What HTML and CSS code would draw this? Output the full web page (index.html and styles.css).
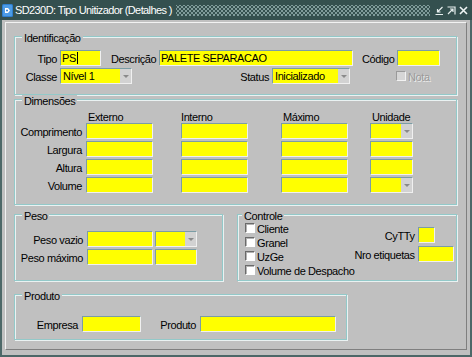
FILE: index.html
```html
<!DOCTYPE html>
<html lang="pt">
<head>
    <meta charset="UTF-8">
    <title>SD230D: Tipo Unitizador (Detalhes )</title>
    <link rel="stylesheet" href="styles.css">
</head>
<body>
<div class="window">
    <!-- Title bar -->
    <div class="titlebar">
        <svg class="app-icon" viewBox="0 0 11 13">
            <rect x="0" y="0" width="11" height="13" rx="1.5" fill="#2f7fd0"/>
            <rect x="1" y="1" width="9" height="11" rx="1" fill="#4c9be6"/>
            <path d="M3 4 H6 L8 6.5 L6 9 H3 Z" fill="#ffffff"/>
            <circle cx="5" cy="6.5" r="1" fill="#2f7fd0"/>
        </svg>
        <span class="title">SD230D: Tipo Unitizador (Detalhes )</span>
        <div class="grip"></div>
        <div class="win-buttons">
            <svg viewBox="0 0 9 9"><path d="M7.5 1 L2.5 6 M2.5 3 V6 H5.5 M0.5 8.5 H8" fill="none" stroke="#e6eeee" stroke-width="1.2"/></svg>
            <svg viewBox="0 0 9 9"><path d="M0.5 1 H8 V8.5 M1 8 L6 3 M3 3 H6 V6" fill="none" stroke="#e6eeee" stroke-width="1.2"/></svg>
            <svg viewBox="0 0 9 9"><path d="M1 1 L8 8 M8 1 L1 8" fill="none" stroke="#eef4f4" stroke-width="1.6"/></svg>
        </div>
    </div>

    <div class="frame">
        <div class="panel">
            <!-- Identificação -->
            <div class="group ident">
                <div class="group-title">Identificação</div>
                <div class="row">
                    <span class="lbl lbl-first">Tipo</span>
                    <div class="field f-tipo">PS<span class="caret"></span></div>
                    <span class="lbl lbl-desc">Descrição</span>
                    <div class="field f-desc">PALETE SEPARACAO</div>
                    <span class="lbl lbl-cod">Código</span>
                    <div class="field f-cod"></div>
                </div>
                <div class="row">
                    <span class="lbl lbl-first">Classe</span>
                    <div class="field select f-classe"><span class="value">Nível 1</span><span class="drop"></span></div>
                    <span class="lbl lbl-status">Status</span>
                    <div class="field select f-status"><span class="value">Inicializado</span><span class="drop"></span></div>
                    <div class="check disabled nota"><span class="box"></span>Nota</div>
                </div>
            </div>

            <!-- Dimensões -->
            <div class="group dims">
                <div class="group-title">Dimensões</div>
                <div class="dim-head">
                    <span></span>
                    <span>Externo</span>
                    <span class="no-pad">Interno</span>
                    <span>Máximo</span>
                    <span>Unidade</span>
                </div>
                <div class="dim-grid">
                    <span class="lbl lbl-dim">Comprimento</span>
                    <div class="field f-dim"></div>
                    <div class="field f-dim"></div>
                    <div class="field f-dim"></div>
                    <div class="field select f-unit"><span class="value"></span><span class="drop"></span></div>

                    <span class="lbl lbl-dim">Largura</span>
                    <div class="field f-dim"></div>
                    <div class="field f-dim"></div>
                    <div class="field f-dim"></div>
                    <div class="field f-unit"></div>

                    <span class="lbl lbl-dim">Altura</span>
                    <div class="field f-dim"></div>
                    <div class="field f-dim"></div>
                    <div class="field f-dim"></div>
                    <div class="field f-unit"></div>

                    <span class="lbl lbl-dim">Volume</span>
                    <div class="field f-dim"></div>
                    <div class="field f-dim"></div>
                    <div class="field f-dim"></div>
                    <div class="field select f-unit"><span class="value"></span><span class="drop"></span></div>
                </div>
            </div>

            <div class="bottom-row">
                <!-- Peso -->
                <div class="group peso">
                    <div class="group-title">Peso</div>
                    <div class="peso-grid">
                        <span class="lbl lbl-peso">Peso vazio</span>
                        <div class="field"></div>
                        <div class="field select"><span class="value"></span><span class="drop"></span></div>

                        <span class="lbl lbl-peso">Peso máximo</span>
                        <div class="field"></div>
                        <div class="field"></div>
                    </div>
                </div>

                <!-- Controle -->
                <div class="group controle">
                    <div class="group-title">Controle</div>
                    <div class="ctrl-body">
                        <div class="checks">
                            <div class="check"><span class="box"></span>Cliente</div>
                            <div class="check"><span class="box"></span>Granel</div>
                            <div class="check"><span class="box"></span>UzGe</div>
                            <div class="check"><span class="box"></span>Volume de Despacho</div>
                        </div>
                        <div class="ctrl-fields">
                            <span class="lbl lbl-ctrl">CyTTy</span>
                            <div class="field f-cytty"></div>
                            <span class="lbl lbl-ctrl">Nro etiquetas</span>
                            <div class="field"></div>
                        </div>
                    </div>
                </div>
            </div>

            <!-- Produto -->
            <div class="group produto">
                <div class="group-title">Produto</div>
                <div class="row">
                    <span class="lbl lbl-empresa">Empresa</span>
                    <div class="field f-empresa"></div>
                    <span class="lbl lbl-produto">Produto</span>
                    <div class="field f-produto"></div>
                </div>
            </div>
        </div>
    </div>
</div>
</body>
</html>
```

FILE: styles.css
```css
/* General Reset */
* {
    margin: 0;
    padding: 0;
    box-sizing: border-box;
}

body {
    font-family: "Liberation Sans", Arial, sans-serif;
    font-size: 11px;
    letter-spacing: -0.4px;
    color: #000;
    background-color: #c0c0c0;
}

.window {
    width: 472px;
    height: 357px;
    display: flex;
    flex-direction: column;
    background-color: #c0c0c0;
}

/* Title bar */
.titlebar {
    height: 20px;
    flex: none;
    display: flex;
    align-items: center;
    padding: 0 4px 0 2px;
    background-color: #34504f;
    color: #fff;
}

.app-icon {
    width: 11px;
    height: 13px;
    flex: none;
    margin-right: 2px;
}

.title {
    white-space: nowrap;
    letter-spacing: -0.6px;
}

.grip {
    flex: 1;
    height: 11px;
    margin: 0 5px 0 4px;
    background-image:
        radial-gradient(circle, #7f9b9b 0.9px, transparent 1.2px),
        radial-gradient(circle, #7f9b9b 0.9px, transparent 1.2px);
    background-size: 4px 4px;
    background-position: 0 0, 2px 2px;
}

.win-buttons {
    display: flex;
    gap: 3px;
}

.win-buttons svg {
    width: 9px;
    height: 9px;
}

/* Window body */
.frame {
    flex: 1;
    display: flex;
    border: 2px solid #4d6868;
    border-top: 0;
    padding: 2px 3px 5px;
}

.panel {
    flex: 1;
    border: 1px solid;
    border-color: #f2f2f2 #7f7f7f #7f7f7f #f2f2f2;
    padding: 13px 9px 0 8px;
}

/* Group boxes */
.group {
    border: 1px solid #93c9c9;
    box-shadow: inset 1px 1px 0 #eaf2f2, 1px 1px 0 #eaf2f2;
}

.group-title {
    display: table;
    margin: -5px 0 0 7px;
    padding: 0 2px;
    line-height: 12px;
    background-color: #c0c0c0;
}

.ident {
    padding-bottom: 10px;
}

.dims {
    margin-top: 4px;
    padding-bottom: 11px;
}

.bottom-row {
    display: flex;
    gap: 14px;
    margin-top: 9px;
}

.peso {
    width: 209px;
    padding-bottom: 15px;
}

.controle {
    width: 220px;
}

.controle .group-title {
    margin-left: 4px;
}

.produto {
    width: 333px;
    margin-top: 13px;
    padding-bottom: 7px;
}

/* Rows and labels */
.row {
    display: flex;
    align-items: flex-start;
    height: 16px;
}

.ident .group-title + .row {
    margin-top: 6px;
}

.row + .row {
    margin-top: 2px;
}

.lbl {
    padding-top: 1px;
    line-height: 16px;
    white-space: nowrap;
}

.lbl-first {
    width: 45px;
    text-align: right;
    padding-right: 3px;
}

.lbl-desc {
    width: 48px;
    margin-left: 10px;
}

.lbl-cod {
    width: 35px;
    margin-left: 9px;
}

.lbl-status {
    width: 140px;
    text-align: right;
    padding-right: 3px;
}

/* Fields */
.field {
    height: 16px;
    background-color: #ffff00;
    border: 1px solid;
    border-color: #7b9da5 #f0f0f0 #f0f0f0 #7b9da5;
    line-height: 14px;
    padding: 0 1px;
    white-space: nowrap;
    overflow: hidden;
}

.caret {
    display: inline-block;
    width: 1px;
    height: 12px;
    margin-left: 1px;
    vertical-align: -2px;
    background-color: #000;
}

.f-tipo { width: 41px; }
.f-desc { width: 194px; }
.f-cod { width: 43px; }
.f-classe { width: 72px; }
.f-status { width: 78px; }

.select {
    display: flex;
    padding: 0;
}

.select .value {
    flex: 1;
    padding-left: 2px;
}

.select .drop {
    width: 11px;
    display: flex;
    align-items: center;
    justify-content: center;
    background-color: #d2d2d2;
}

.select .drop::after {
    content: "";
    border-left: 3px solid transparent;
    border-right: 3px solid transparent;
    border-top: 3px solid #8a8a8a;
}

/* Checkboxes */
.check {
    display: flex;
    align-items: center;
    height: 14px;
    white-space: nowrap;
}

.check .box {
    width: 10px;
    height: 10px;
    margin: -3px 2px 0 0;
    background-color: #fff;
    border: 1px solid;
    border-color: #6a6a6a #ffffff #ffffff #6a6a6a;
    box-shadow: inset 1px 1px 0 #b4b4b4;
}

.check.disabled {
    color: #9a9a9a;
    text-shadow: 1px 1px 0 #ececec;
}

.check.disabled .box {
    background-color: #d6d6d6;
    border-color: #9a9a9a #f2f2f2 #f2f2f2 #9a9a9a;
    box-shadow: none;
}

.nota {
    margin: 2px 0 0 46px;
}

/* Dimensões grid */
.dim-head,
.dim-grid {
    display: grid;
    grid-template-columns: 71px 95px 100px 89px 43px;
}

.dim-head {
    height: 13px;
    margin-top: 3px;
    line-height: 14px;
}

.dim-head span {
    padding-left: 2px;
}

.dim-head .no-pad {
    padding-left: 0;
}

.dim-grid {
    grid-auto-rows: 16px;
    row-gap: 2px;
}

.lbl-dim {
    text-align: right;
    padding-right: 4px;
}

.f-dim { width: 67px; }
.f-unit { width: 43px; }

/* Peso grid */
.peso-grid {
    display: grid;
    grid-template-columns: 70px 66px 42px;
    grid-auto-rows: 16px;
    column-gap: 2px;
    row-gap: 2px;
    margin-top: 9px;
}

.lbl-peso {
    text-align: right;
    padding-right: 2px;
}

/* Controle */
.ctrl-body {
    display: flex;
}

.checks {
    padding-left: 7px;
}

.ctrl-fields {
    display: grid;
    grid-template-columns: auto 36px;
    grid-auto-rows: 16px;
    row-gap: 3px;
    margin: 5px 17px 0 auto;
}

.lbl-ctrl {
    text-align: right;
    padding-right: 3px;
}

.f-cytty { width: 17px; }

/* Produto */
.produto .row {
    margin-top: 14px;
}

.lbl-empresa {
    width: 67px;
    text-align: right;
    padding-right: 4px;
}

.lbl-produto {
    width: 59px;
    text-align: right;
    padding-right: 4px;
}

.f-empresa { width: 59px; }
.f-produto { width: 136px; }
```
